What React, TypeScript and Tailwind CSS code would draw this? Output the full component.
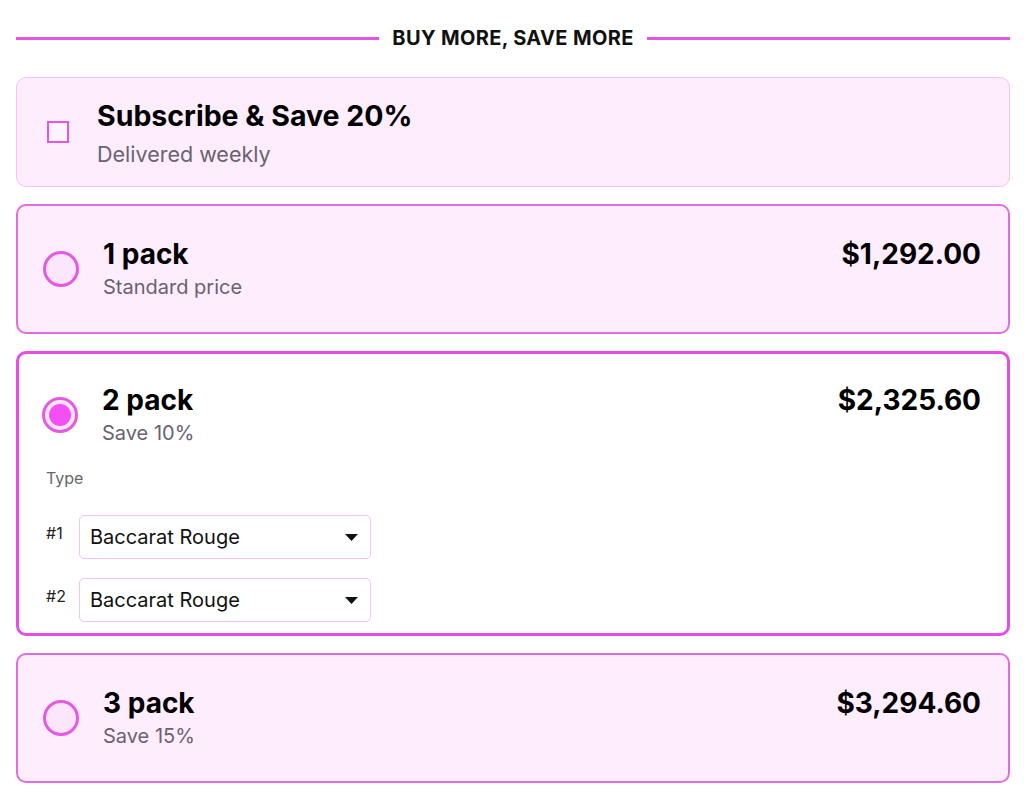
import React, { useState } from 'react';

interface PackOption {
  id: string;
  title: string;
  subtitle: string;
  price: string;
}

const packs: PackOption[] = [
  { id: '1', title: '1 pack', subtitle: 'Standard price', price: '$1,292.00' },
  { id: '2', title: '2 pack', subtitle: 'Save 10%', price: '$2,325.60' },
  { id: '3', title: '3 pack', subtitle: 'Save 15%', price: '$3,294.60' },
];

const Radio = ({ checked }: { checked: boolean }) => (
  <span className="flex h-9 w-9 shrink-0 items-center justify-center rounded-full border-[3px] border-[#e55ae5] bg-[#fbe6fb]">
    {checked && <span className="h-[22px] w-[22px] rounded-full bg-[#f54ef5]" />}
  </span>
);

const TypeSelect = ({ label }: { label: string }) => (
  <div className="flex items-start gap-[13px]">
    <span className="w-5 pt-[6px] text-[16px] leading-6 text-[#222]">{label}</span>
    <div className="flex h-[44px] w-[292px] items-center justify-between rounded-[5px] border border-[#f3c3f3] bg-white pl-[10px] pr-[12px]">
      <span className="text-[20px] text-[#111]">Baccarat Rouge</span>
      <svg width="13" height="7" viewBox="0 0 13 7">
        <path d="M0 0h13L6.5 7z" fill="#111" />
      </svg>
    </div>
  </div>
);

export default function App() {
  const [selected, setSelected] = useState('2');
  const [subscribe, setSubscribe] = useState(false);

  return (
    <div className="min-h-[807px] bg-white pl-4 pr-[14px] pt-[26px] font-['Inter',sans-serif] text-black">
      {/* Section heading */}
      <div className="flex h-6 items-center gap-[13px]">
        <div className="h-[3px] flex-1 bg-[#e455e4]" />
        <span className="text-[20px] font-bold tracking-[0.35px] text-[#111]">BUY MORE, SAVE MORE</span>
        <div className="h-[3px] flex-1 bg-[#e455e4]" />
      </div>

      <div className="mt-[27px] flex flex-col gap-[17px]">
        {/* Subscribe option */}
        <button
          className="flex h-[110px] items-center rounded-[10px] border border-[#f4c4f4] bg-[#fdedfd] pl-[30px] text-left"
          onClick={() => setSubscribe(!subscribe)}
        >
          <span className="flex h-[22px] w-[22px] shrink-0 items-center justify-center border-2 border-[#e455e4] bg-[#fdf3fd]">
            {subscribe && <span className="h-3 w-3 bg-[#e455e4]" />}
          </span>
          <div className="ml-[28px] mt-[2px]">
            <div className="text-[28.5px] font-bold leading-[34px]">Subscribe &amp; Save 20%</div>
            <div className="mt-[7px] text-[21.5px] leading-7 text-[#6a6270]">Delivered weekly</div>
          </div>
        </button>

        {packs.map((pack) => {
          const isSelected = selected === pack.id;
          return (
            <div
              key={pack.id}
              onClick={() => setSelected(pack.id)}
              className={
                isSelected
                  ? 'rounded-[10px] border-[3px] border-[#e64ce6] bg-white pb-[11px]'
                  : 'rounded-[10px] border-2 border-[#e06ee0] bg-[#fdedfd]'
              }
            >
              <div
                className={
                  isSelected
                    ? 'flex items-center pl-[23px] pr-[26px] pt-[29px]'
                    : 'flex items-center pl-[25px] pr-[27px] py-[31px]'
                }
              >
                <Radio checked={isSelected} />
                <div className="ml-6 flex-1 self-start">
                  <div className="text-[28px] font-bold leading-[34px]">{pack.title}</div>
                  <div className="mt-[2px] text-[20px] leading-7 text-[#6a6270]">{pack.subtitle}</div>
                </div>
                <div className="self-start text-[28px] font-bold leading-[34px]">{pack.price}</div>
              </div>

              {isSelected && (
                <div className="pl-[27px]">
                  <div className="mt-[19px] text-[16px] leading-6 text-[#666]">Type</div>
                  <div className="mt-[25px] flex flex-col gap-[19px]">
                    <TypeSelect label="#1" />
                    <TypeSelect label="#2" />
                  </div>
                </div>
              )}
            </div>
          );
        })}
      </div>
    </div>
  );
}
